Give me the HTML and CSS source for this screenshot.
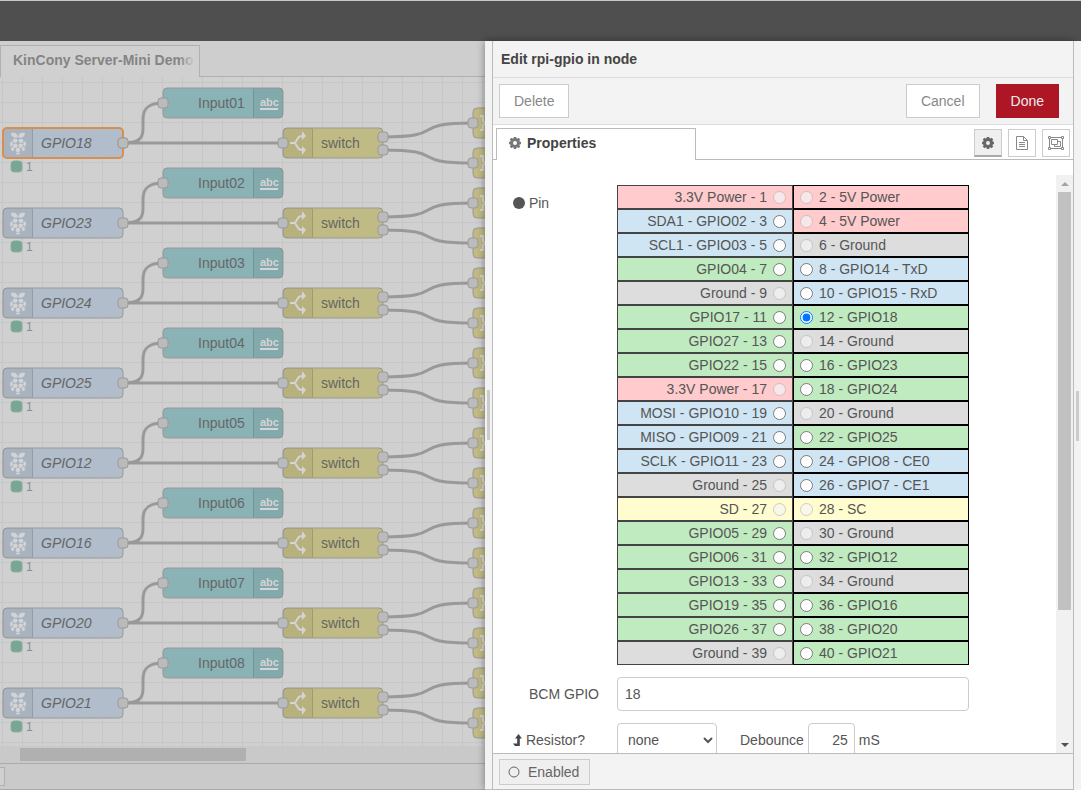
FILE: index.html
```html
<!DOCTYPE html>
<html lang="en">
<head>
<meta charset="utf-8">
<title>Edit rpi-gpio in node</title>
<link rel="stylesheet" href="styles.css">
</head>
<body>
<header class="topbar"></header>
<main class="editor">
  <section class="workspace">
    <div class="flow-tabs"><a class="flow-tab" href="#flow">KinCony Server-Mini Demo</a></div>
    <div class="canvas" id="flow">
      <svg class="flow" width="100%" height="100%">
        <defs>
          <pattern id="grid" x="2" y="5" width="20" height="20" patternUnits="userSpaceOnUse">
            <path class="grid-line" d="M0.5 0V20M0 0.5H20"/>
          </pattern>
          <g id="port"><rect class="port" x="-5" y="-5" width="10" height="10" rx="3"/></g>
          <g id="branch" class="branch">
            <path d="M-8 0H-3M-3 0L0 -5Q1 -7 5 -7M-3 0L0 5Q1 7 5 7"/>
            <path class="solid" d="M4 -12L8 -7L4 -3ZM4 3L8 7L4 12Z"/>
          </g>
          <g id="berry" class="berry">
            <path d="M-0.4 -5.4C-4 -4.6 -7 -6.5 -7 -10C-4 -11 -1 -10 -0.4 -7ZM0.4 -5.4C4 -4.6 7 -6.5 7 -10C4 -11 1 -10 0.4 -7Z"/>
            <ellipse cx="-2.9" cy="-2.2" rx="2.5" ry="2.1"/><ellipse cx="2.9" cy="-2.2" rx="2.5" ry="2.1"/>
            <ellipse cx="-6.6" cy="1" rx="1.4" ry="2.4"/><ellipse cx="6.6" cy="1" rx="1.4" ry="2.4"/>
            <circle cx="-2.7" cy="2.8" r="2.3"/><circle cx="2.7" cy="2.8" r="2.3"/>
            <ellipse cx="-5.4" cy="6" rx="1.6" ry="2"/><ellipse cx="5.4" cy="6" rx="1.6" ry="2"/>
            <circle cx="0" cy="7" r="2.3"/><ellipse cx="0" cy="10.5" rx="2.2" ry="0.9"/>
          </g>
          <g id="row">
            <path class="wire" d="M123 66C137 66 143 63 143 52V42C143 31 149 26 163 26M123 66H283M383 60C450 60 406 46 473 46M383 73C450 73 406 86 473 86"/>
            <rect class="node gpio" x="3" y="51" width="120" height="30" rx="4"/>
            <path class="icon-bg" d="M7 51H33V81H7Q3 81 3 77V55Q3 51 7 51Z"/>
            <path class="divider" d="M32.5 52V80"/>
            <use href="#berry" x="18" y="66"/>
            <use href="#port" x="123" y="66"/>
            <rect class="status" x="11" y="84" width="11" height="11" rx="3"/>
            <text class="status-text" x="26" y="94">1</text>
            <rect class="node text-out" x="163" y="11" width="120" height="30" rx="4"/>
            <path class="icon-bg" d="M253 11H279Q283 11 283 15V37Q283 41 279 41H253Z"/>
            <path class="divider" d="M253.5 12V40"/>
            <text class="abc" x="260" y="29">abc</text>
            <rect class="abc-line" x="260" y="31" width="18" height="2"/>
            <use href="#port" x="163" y="26"/>
            <rect class="node switch" x="283" y="51" width="100" height="30" rx="4"/>
            <path class="icon-bg" d="M287 51H313V81H287Q283 81 283 77V55Q283 51 287 51Z"/>
            <path class="divider" d="M312.5 52V80"/>
            <use href="#branch" x="298" y="66"/>
            <text class="label" x="321" y="71">switch</text>
            <use href="#port" x="283" y="66"/>
            <use href="#port" x="383" y="60"/>
            <use href="#port" x="383" y="73"/>
            <rect class="node switch" x="473" y="31" width="100" height="30" rx="4"/>
            <rect class="node switch" x="473" y="71" width="100" height="30" rx="4"/>
            <path class="brace" d="M480 39H483V44L486 46L483 48V53H480M480 79H483V84L486 86L483 88V93H480"/>
            <use href="#port" x="473" y="46"/>
            <use href="#port" x="473" y="86"/>
          </g>
        </defs>
        <rect width="100%" height="100%" fill="url(#grid)"/>
        <g><use href="#row"/><rect class="selected" x="3" y="51" width="120" height="30" rx="4"/><use href="#port" x="123" y="66"/><text class="label gpio-label" x="41" y="71">GPIO18</text><text class="label" x="198" y="31">Input01</text></g>
        <g transform="translate(0 80)"><use href="#row"/><text class="label gpio-label" x="41" y="71">GPIO23</text><text class="label" x="198" y="31">Input02</text></g>
        <g transform="translate(0 160)"><use href="#row"/><text class="label gpio-label" x="41" y="71">GPIO24</text><text class="label" x="198" y="31">Input03</text></g>
        <g transform="translate(0 240)"><use href="#row"/><text class="label gpio-label" x="41" y="71">GPIO25</text><text class="label" x="198" y="31">Input04</text></g>
        <g transform="translate(0 320)"><use href="#row"/><text class="label gpio-label" x="41" y="71">GPIO12</text><text class="label" x="198" y="31">Input05</text></g>
        <g transform="translate(0 400)"><use href="#row"/><text class="label gpio-label" x="41" y="71">GPIO16</text><text class="label" x="198" y="31">Input06</text></g>
        <g transform="translate(0 480)"><use href="#row"/><text class="label gpio-label" x="41" y="71">GPIO20</text><text class="label" x="198" y="31">Input07</text></g>
        <g transform="translate(0 560)"><use href="#row"/><text class="label gpio-label" x="41" y="71">GPIO21</text><text class="label" x="198" y="31">Input08</text></g>
      </svg>
    </div>
    <div class="h-scroll"><div class="h-thumb"></div></div>
    <div class="workspace-footer"><button class="nav-button" type="button" aria-label="Toggle navigator"></button></div>
  </section>

  <section class="tray">
    <div class="separator"><span class="grip"></span></div>
    <form class="dialog">
      <h1 class="title">Edit rpi-gpio in node</h1>
      <div class="toolbar">
        <button class="btn" type="button">Delete</button>
        <button class="btn cancel" type="button">Cancel</button>
        <button class="btn primary" type="button">Done</button>
      </div>
      <div class="tabs">
        <a class="tab" href="#properties">
          <svg class="icon gear" viewBox="-7 -7 14 14"><circle r="3.5"/><path d="M0 -6V-4M0 4V6M-6 0H-4M4 0H6M-4.4 -4.4L-3 -3M3 3L4.4 4.4M-4.4 4.4L-3 3M3 -3L4.4 -4.4"/></svg>
          Properties
        </a>
        <div class="tab-buttons">
          <button class="icon-btn active" type="button" aria-label="Properties"><svg class="icon gear" viewBox="-7 -7 14 14"><circle r="3.5"/><path d="M0 -6V-4M0 4V6M-6 0H-4M4 0H6M-4.4 -4.4L-3 -3M3 3L4.4 4.4M-4.4 4.4L-3 3M3 -3L4.4 -4.4"/></svg></button>
          <button class="icon-btn" type="button" aria-label="Description"><svg class="icon line" viewBox="0 0 14 14"><path d="M1.5 0.5H8.5L12.5 4.5V13.5H1.5ZM8.5 0.5V4.5H12.5M4 6.5H10M4 8.5H10M4 10.5H10"/></svg></button>
          <button class="icon-btn" type="button" aria-label="Appearance"><svg class="icon line wide" viewBox="0 0 16 14"><path d="M2.5 1.5H13.5M2.5 12.5H13.5M1.5 2.5V11.5M14.5 2.5V11.5M0.5 0.5H2.5V2.5H0.5ZM13.5 0.5H15.5V2.5H13.5ZM0.5 11.5H2.5V13.5H0.5ZM13.5 11.5H15.5V13.5H13.5ZM3.5 3.5H9.5V8.5H3.5ZM9.5 5.5H12.5V10.5H6.5V8.5"/></svg></button>
        </div>
      </div>
      <div class="body" id="properties">
        <div class="fields">
          <div class="field pins">
            <span class="field-label"><svg class="icon dot" viewBox="0 0 12 12"><circle cx="6" cy="6" r="6"/></svg> Pin</span>
            <table class="pin-table">
              <tr><td class="power"><label>3.3V Power - 1<input type="radio" name="pin" disabled></label></td><td class="power"><label><input type="radio" name="pin" disabled>2 - 5V Power</label></td></tr>
              <tr><td class="bus"><label>SDA1 - GPIO02 - 3<input type="radio" name="pin"></label></td><td class="power"><label><input type="radio" name="pin" disabled>4 - 5V Power</label></td></tr>
              <tr><td class="bus"><label>SCL1 - GPIO03 - 5<input type="radio" name="pin"></label></td><td class="ground"><label><input type="radio" name="pin" disabled>6 - Ground</label></td></tr>
              <tr><td class="io"><label>GPIO04 - 7<input type="radio" name="pin"></label></td><td class="bus"><label><input type="radio" name="pin">8 - GPIO14 - TxD</label></td></tr>
              <tr><td class="ground"><label>Ground - 9<input type="radio" name="pin" disabled></label></td><td class="bus"><label><input type="radio" name="pin">10 - GPIO15 - RxD</label></td></tr>
              <tr><td class="io"><label>GPIO17 - 11<input type="radio" name="pin"></label></td><td class="io"><label><input type="radio" name="pin" checked>12 - GPIO18</label></td></tr>
              <tr><td class="io"><label>GPIO27 - 13<input type="radio" name="pin"></label></td><td class="ground"><label><input type="radio" name="pin" disabled>14 - Ground</label></td></tr>
              <tr><td class="io"><label>GPIO22 - 15<input type="radio" name="pin"></label></td><td class="io"><label><input type="radio" name="pin">16 - GPIO23</label></td></tr>
              <tr><td class="power"><label>3.3V Power - 17<input type="radio" name="pin" disabled></label></td><td class="io"><label><input type="radio" name="pin">18 - GPIO24</label></td></tr>
              <tr><td class="bus"><label>MOSI - GPIO10 - 19<input type="radio" name="pin"></label></td><td class="ground"><label><input type="radio" name="pin" disabled>20 - Ground</label></td></tr>
              <tr><td class="bus"><label>MISO - GPIO09 - 21<input type="radio" name="pin"></label></td><td class="io"><label><input type="radio" name="pin">22 - GPIO25</label></td></tr>
              <tr><td class="bus"><label>SCLK - GPIO11 - 23<input type="radio" name="pin"></label></td><td class="bus"><label><input type="radio" name="pin">24 - GPIO8 - CE0</label></td></tr>
              <tr><td class="ground"><label>Ground - 25<input type="radio" name="pin" disabled></label></td><td class="bus"><label><input type="radio" name="pin">26 - GPIO7 - CE1</label></td></tr>
              <tr><td class="sd"><label>SD - 27<input type="radio" name="pin" disabled></label></td><td class="sd"><label><input type="radio" name="pin" disabled>28 - SC</label></td></tr>
              <tr><td class="io"><label>GPIO05 - 29<input type="radio" name="pin"></label></td><td class="ground"><label><input type="radio" name="pin" disabled>30 - Ground</label></td></tr>
              <tr><td class="io"><label>GPIO06 - 31<input type="radio" name="pin"></label></td><td class="io"><label><input type="radio" name="pin">32 - GPIO12</label></td></tr>
              <tr><td class="io"><label>GPIO13 - 33<input type="radio" name="pin"></label></td><td class="ground"><label><input type="radio" name="pin" disabled>34 - Ground</label></td></tr>
              <tr><td class="io"><label>GPIO19 - 35<input type="radio" name="pin"></label></td><td class="io"><label><input type="radio" name="pin">36 - GPIO16</label></td></tr>
              <tr><td class="io"><label>GPIO26 - 37<input type="radio" name="pin"></label></td><td class="io"><label><input type="radio" name="pin">38 - GPIO20</label></td></tr>
              <tr><td class="ground"><label>Ground - 39<input type="radio" name="pin" disabled></label></td><td class="io"><label><input type="radio" name="pin">40 - GPIO21</label></td></tr>
            </table>
          </div>
          <div class="field">
            <label class="field-label indented" for="bcm">BCM GPIO</label>
            <input class="text-input bcm" id="bcm" type="text" value="18">
          </div>
          <div class="field">
            <label class="field-label" for="resistor"><svg class="icon level" viewBox="0 0 9 12"><path d="M5.5 0L9 4.5H6.8V12H2L0 9.5H4.2V4.5H2Z"/></svg> Resistor?</label>
            <select class="text-input resistor" id="resistor"><option>none</option><option>pullup</option><option>pulldown</option></select>
            <label class="debounce-label" for="debounce">Debounce</label>
            <input class="text-input debounce" id="debounce" type="text" value="25">
            <span class="unit">mS</span>
          </div>
        </div>
        <div class="v-scroll">
          <svg class="arrow up" viewBox="0 0 8 4"><path d="M4 0L8 4H0Z"/></svg>
          <div class="v-thumb"></div>
          <svg class="arrow down" viewBox="0 0 8 4"><path d="M0 0H8L4 4Z"/></svg>
        </div>
      </div>
      <div class="dialog-footer">
        <button class="enabled" type="button"><svg class="icon ring" viewBox="0 0 12 12"><circle cx="6" cy="6" r="5"/></svg>Enabled</button>
      </div>
    </form>
  </section>
  <div class="separator right"><span class="grip"></span></div>
</main>
</body>
</html>
```

FILE: styles.css
```css
* { box-sizing: border-box; }

body {
  margin: 0;
  height: 100vh;
  display: flex;
  flex-direction: column;
  overflow: hidden;
  font: 14px/20px "Liberation Sans", Arial, sans-serif;
  color: #555;
  background: #f3f3f3;
}

button, input, select { font: inherit; color: inherit; margin: 0; }
a { color: inherit; text-decoration: none; }

.topbar { flex: none; height: 41px; background: #4f4f4f; border-top: 1px solid #c8c8c8; }

.editor { flex: 1; min-height: 0; display: flex; }

/* Shaded flow workspace */
.workspace { flex: 1 1 485px; min-width: 0; display: flex; flex-direction: column; background: #cacaca; overflow: hidden; }
.flow-tabs { flex: none; height: 36px; padding-top: 4px; background: #cecece; border-bottom: 1px solid #b0b0b0; }
.flow-tab {
  display: block; width: 200px; height: 32px; padding: 0 6px 0 12px; line-height: 28px;
  font-weight: bold; color: #848484; background: #d0d0d0; white-space: nowrap; overflow: hidden;
  border: 1px solid #b0b0b0; border-bottom: 0; position: relative;
}
.flow-tab::after { content: ""; position: absolute; top: 0; right: 0; bottom: 0; width: 20px; background: linear-gradient(to right, transparent, #d0d0d0 80%); }
.canvas { flex: 1; min-height: 0; background: #d0d0d0; }
.flow { display: block; }
.grid-line { stroke: #c6c6c6; fill: none; }
.wire { stroke: #999; stroke-width: 3; fill: none; }
.node { stroke: #999; stroke-width: 1; }
.gpio { fill: #b1bdca; }
.text-out { fill: #8ab3b6; }
.switch { fill: #c0bb84; }
.selected { fill: none; stroke: #d68f50; stroke-width: 2; }
.port { fill: #bbb; stroke: #999; }
.icon-bg { fill: #000; fill-opacity: 0.05; }
.divider { stroke: #000; stroke-opacity: 0.12; }
.berry { fill: #d4d4d4; }
.branch { fill: none; stroke: #d4d4d4; stroke-width: 2; }
.branch .solid { fill: #d4d4d4; stroke: none; }
.brace { fill: none; stroke: #d4d4d4; stroke-width: 2; }
.status { fill: #7aa592; stroke: #86b09c; }
.status-text { font-size: 12px; fill: #888e96; }
.label { font-size: 14px; fill: #666; }
.gpio-label { font-style: italic; }
.abc { font-size: 11px; font-weight: bold; fill: #d4d4d4; }
.abc-line { fill: #d4d4d4; }
.h-scroll { flex: none; height: 18px; padding: 2px 0 3px 20px; background: #c9c9c9; border-bottom: 1px solid #aaa; }
.h-thumb { width: 226px; height: 13px; background: #b0b0b0; }
.workspace-footer { flex: none; height: 26px; padding-top: 3px; border-bottom: 1px solid #aaa; }
.nav-button { display: block; width: 5px; height: 19px; padding: 0; background: #d0d0d0; border: 1px solid #b0b0b0; border-left: 0; }

/* Edit dialog */
.tray { flex: 1 1 589px; min-width: 0; display: flex; background: #f3f3f3; box-shadow: 0 0 8px rgba(0, 0, 0, 0.4); position: relative; border-bottom: 1px solid #bbb; }
.separator { flex: none; width: 7px; display: flex; align-items: center; justify-content: center; background: #f3f3f3; }
.right { position: relative; }
.grip { width: 3px; height: 50px; background: #ccc; }
.dialog { flex: 1; min-width: 0; display: flex; flex-direction: column; border: 1px solid #bbb; border-width: 0 1px; }
.title { flex: none; margin: 0; height: 37px; padding: 0 8px; font-size: 14px; line-height: 36px; color: #444; border-bottom: 1px solid #ddd; }
.toolbar { flex: none; height: 47px; display: flex; align-items: center; gap: 16px; padding: 0 14px 0 6px; border-bottom: 1px solid #ddd; }
.btn { height: 34px; padding: 0 14px; color: #888; background: #fff; border: 1px solid #ccc; }
.cancel { margin-left: auto; }
.primary { color: #eee; background: #ad1625; border-color: #ad1625; }
.tabs { flex: none; height: 35px; display: flex; justify-content: space-between; align-items: flex-end; padding-left: 3px; background: linear-gradient(#bbb, #bbb) bottom / 100% 1px no-repeat #fff; }
.tab { width: 200px; height: 32px; display: flex; align-items: center; gap: 5px; padding: 0 11px 3px; font-weight: bold; color: #444; background: #fff; border: 1px solid #bbb; border-bottom: 0; }
.tab-buttons { display: flex; gap: 6px; padding: 0 3px 3px 0; }
.icon-btn { width: 28px; height: 28px; padding: 0; display: flex; align-items: center; justify-content: center; color: #888; background: #fff; border: 1px solid #ccc; }
.icon-btn.active { color: #666; background: #efefef; border-bottom: 2px solid #aaa; }

.icon { display: inline-block; fill: currentColor; }
.gear { width: 14px; height: 14px; fill: none; stroke: currentColor; stroke-width: 3; }
.tab .gear { color: #777; }
.gear path { stroke-width: 2.6; }
.line { width: 14px; height: 14px; fill: none; stroke: currentColor; }
.wide { width: 16px; }
.dot { width: 12px; height: 12px; vertical-align: -1px; }
.level { width: 9px; height: 12px; color: #444; vertical-align: -1px; }
.ring { width: 12px; height: 12px; fill: none; stroke: currentColor; }

.body { flex: 1; min-height: 0; display: flex; background: #fff; overflow: hidden; }
.fields { flex: 1; min-width: 0; padding: 25px 20px 0; }
.field { display: flex; align-items: center; margin-bottom: 12px; }
.pins { align-items: flex-start; }
.field-label { flex: none; width: 104px; white-space: nowrap; }
.pins .field-label { padding-top: 8px; }
.indented { padding-left: 16px; }
.pin-table { width: 352px; table-layout: fixed; border-spacing: 0; }
.pin-table td { height: 24px; padding: 0 6px; border: 1px solid #000; }
.pin-table td:first-child { border-color: #444; }
.pin-table label { display: flex; align-items: center; gap: 6px; white-space: nowrap; }
.pin-table td:first-child label { justify-content: flex-end; }
.pin-table input { width: 13px; height: 13px; }
.power { background: #ffcbcd; }
.bus { background: #cfe5f4; }
.io { background: #c0ebc0; }
.ground { background: #ddd; }
.sd { background: #fffdd0; }

.text-input { height: 34px; padding: 0 7px; background: #fff; border: 1px solid #ccc; border-radius: 4px; }
.bcm { width: 352px; }
.resistor { width: 100px; padding: 0 6px; }
.debounce-label { margin: 0 4px 0 23px; }
.debounce { width: 47px; padding: 0 6px; text-align: right; }
.unit { margin-left: 4px; }

.v-scroll { flex: none; width: 17px; margin-top: 15px; display: flex; flex-direction: column; align-items: center; background: #f1f1f1; }
.arrow { flex: none; width: 8px; height: 4px; margin: 7px 0 6px; }
.up { fill: #a3a3a3; }
.down { fill: #505050; margin-top: auto; }
.v-thumb { width: 13px; height: 418px; max-height: 80%; background: #c1c1c1; }

.dialog-footer { flex: none; height: 36px; padding: 5px 6px; border-top: 1px solid #bbb; }
.enabled { height: 26px; display: flex; align-items: center; gap: 8px; padding: 0 11px 0 8px; color: #666; background: #efefef; border: 1px solid #ccc; }
.enabled { padding-right: 10px; }
```
